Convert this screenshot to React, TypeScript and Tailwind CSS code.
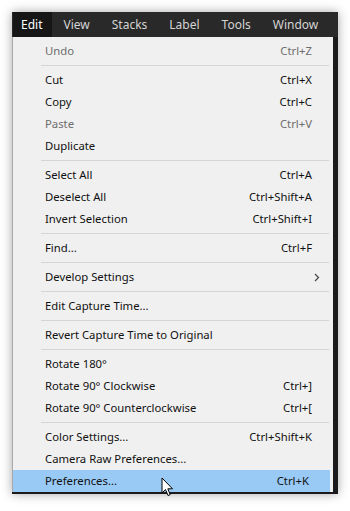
import React from 'react'

type Row =
  | { sep: true }
  | { label: string; shortcut?: string; disabled?: boolean; submenu?: boolean; active?: boolean }

const rows: Row[] = [
  { label: 'Undo', shortcut: 'Ctrl+Z', disabled: true },
  { sep: true },
  { label: 'Cut', shortcut: 'Ctrl+X' },
  { label: 'Copy', shortcut: 'Ctrl+C' },
  { label: 'Paste', shortcut: 'Ctrl+V', disabled: true },
  { label: 'Duplicate' },
  { sep: true },
  { label: 'Select All', shortcut: 'Ctrl+A' },
  { label: 'Deselect All', shortcut: 'Ctrl+Shift+A' },
  { label: 'Invert Selection', shortcut: 'Ctrl+Shift+I' },
  { sep: true },
  { label: 'Find...', shortcut: 'Ctrl+F' },
  { sep: true },
  { label: 'Develop Settings', submenu: true },
  { sep: true },
  { label: 'Edit Capture Time...' },
  { sep: true },
  { label: 'Revert Capture Time to Original' },
  { sep: true },
  { label: 'Rotate 180°' },
  { label: 'Rotate 90° Clockwise', shortcut: 'Ctrl+]' },
  { label: 'Rotate 90° Counterclockwise', shortcut: 'Ctrl+[' },
  { sep: true },
  { label: 'Color Settings...', shortcut: 'Ctrl+Shift+K' },
  { label: 'Camera Raw Preferences...' },
  { label: 'Preferences...', shortcut: 'Ctrl+K', active: true },
]

const menus = ['Edit', 'View', 'Stacks', 'Label', 'Tools', 'Window']

function Cursor() {
  return (
    <svg width="13" height="20" viewBox="0 0 13 20" className="absolute left-[148px] top-[7px]">
      <path
        d="M1 1 L1 16 L4.5 12.5 L7 18.5 L9.2 17.6 L6.8 11.8 L11.5 11.8 Z"
        fill="#fff"
        stroke="#000"
        strokeWidth="1"
        strokeLinejoin="round"
      />
    </svg>
  )
}

export default function App() {
  return (
    <div
      className="w-[350px] h-[511px] bg-white pl-[12px] pt-[12px]"
      style={{ fontFamily: '"Noto Sans", "Open Sans", sans-serif' }}
    >
      <div className="w-[326px] h-[482px] bg-[#1c1a1d] shadow-[0_0_10px_rgba(0,0,0,0.35)] flex flex-col">
        <div className="flex h-[25px] bg-[#292929] text-[12px] text-[#d4d4d4] leading-[25px]">
          {menus.map((m, i) => (
            <div
              key={m}
              className={
                i === 0
                  ? 'bg-[#161616] text-white pl-[8px] pr-[10px] ml-[1px]'
                  : 'px-[11px]'
              }
            >
              {m}
            </div>
          ))}
        </div>
        <div className="w-[321px] bg-[#f0f0f0] border-l border-[#a9a9a9] pt-[3px] text-[11.3px]">
          {rows.map((r, i) =>
            'sep' in r ? (
              <div key={i} className="h-[7px] flex items-center pl-[28px] pr-[4px]">
                <div className="h-px w-full bg-[#d5d5d5]" />
              </div>
            ) : (
              <div
                key={i}
                className={
                  'relative h-[22px] flex items-center pl-[32px] pr-[21px] ' +
                  (r.active ? 'bg-[#99c9f5] mr-[3px]' : '') +
                  (r.disabled ? ' text-[#6d6d6d]' : ' text-[#111]')
                }
              >
                <span className="flex-1 pt-[1px]">{r.label}</span>
                {r.shortcut && <span className="pt-[1px]">{r.shortcut}</span>}
                {r.submenu && (
                  <svg width="6" height="9" viewBox="0 0 6 9" className="mr-[-8px]">
                    <path d="M1 1 L4.5 4.5 L1 8" fill="none" stroke="#444" strokeWidth="1.2" />
                  </svg>
                )}
                {r.active && <Cursor />}
              </div>
            )
          )}
        </div>
      </div>
    </div>
  )
}
